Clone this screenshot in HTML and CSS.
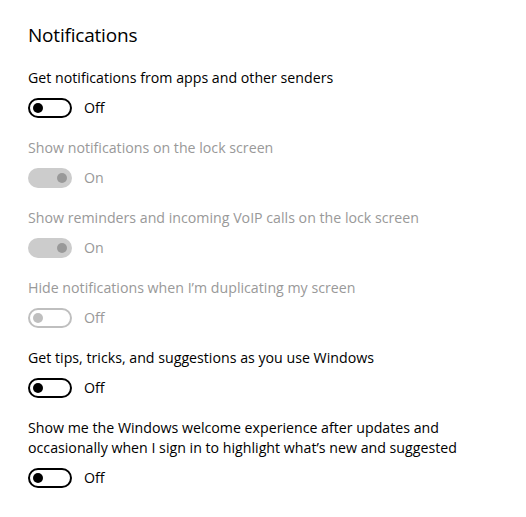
FILE: index.html
```html
<!DOCTYPE html>
<html>
<head>
<meta charset="utf-8">
<link rel="stylesheet" href="styles.css">
</head>
<body>
<main class="page">
  <h1 class="title">Notifications</h1>
  <div class="settings">
    <div class="setting">
      <div class="label">Get notifications from apps and other senders</div>
      <div class="toggle-row"><span class="toggle off"><span class="knob"></span></span><span class="state">Off</span></div>
    </div>
    <div class="setting disabled">
      <div class="label">Show notifications on the lock screen</div>
      <div class="toggle-row"><span class="toggle on"><span class="knob"></span></span><span class="state">On</span></div>
    </div>
    <div class="setting disabled">
      <div class="label">Show reminders and incoming VoIP calls on the lock screen</div>
      <div class="toggle-row"><span class="toggle on"><span class="knob"></span></span><span class="state">On</span></div>
    </div>
    <div class="setting disabled">
      <div class="label">Hide notifications when I’m duplicating my screen</div>
      <div class="toggle-row"><span class="toggle off"><span class="knob"></span></span><span class="state">Off</span></div>
    </div>
    <div class="setting">
      <div class="label">Get tips, tricks, and suggestions as you use Windows</div>
      <div class="toggle-row"><span class="toggle off"><span class="knob"></span></span><span class="state">Off</span></div>
    </div>
    <div class="setting">
      <div class="label">Show me the Windows welcome experience after updates and<br>occasionally when I sign in to highlight what’s new and suggested</div>
      <div class="toggle-row"><span class="toggle off"><span class="knob"></span></span><span class="state">Off</span></div>
    </div>
  </div>
</main>
</body>
</html>
```
FILE: styles.css
```css
html, body {
  margin: 0;
  padding: 0;
  background: #ffffff;
}
body {
  font-family: "Open Sans", "Noto Sans", sans-serif;
  color: #000000;
}
.page {
  padding: 21px 28px 0 28px;
}
.title {
  margin: 0;
  font-size: 19px;
  font-weight: 400;
  line-height: 28px;
  letter-spacing: -0.2px;
}
.settings {
  margin-top: 19px;
  display: flex;
  flex-direction: column;
  gap: 20px;
}
.setting {
  display: flex;
  flex-direction: column;
  gap: 10px;
}
.label {
  font-size: 14.2px;
  line-height: 20px;
}
.toggle-row {
  display: flex;
  align-items: center;
  gap: 12px;
  height: 20px;
}
.state {
  font-size: 14.2px;
  line-height: 20px;
}
.toggle {
  box-sizing: border-box;
  width: 44px;
  height: 20px;
  border-radius: 10px;
  display: flex;
  align-items: center;
  padding: 0 3px;
}
.toggle .knob {
  width: 10px;
  height: 10px;
  border-radius: 50%;
}
.toggle.off {
  border: 2px solid #000000;
  justify-content: flex-start;
  padding-left: 3px;
}
.toggle.off .knob {
  background: #000000;
}
.toggle.on {
  background: #cccccc;
  justify-content: flex-end;
  padding-right: 5px;
}
.toggle.on .knob {
  background: #999999;
}
.disabled .label,
.disabled .state {
  color: #999999;
}
.disabled .toggle.off {
  border-color: #bfbfbf;
}
.disabled .toggle.off .knob {
  background: #bfbfbf;
}
```
